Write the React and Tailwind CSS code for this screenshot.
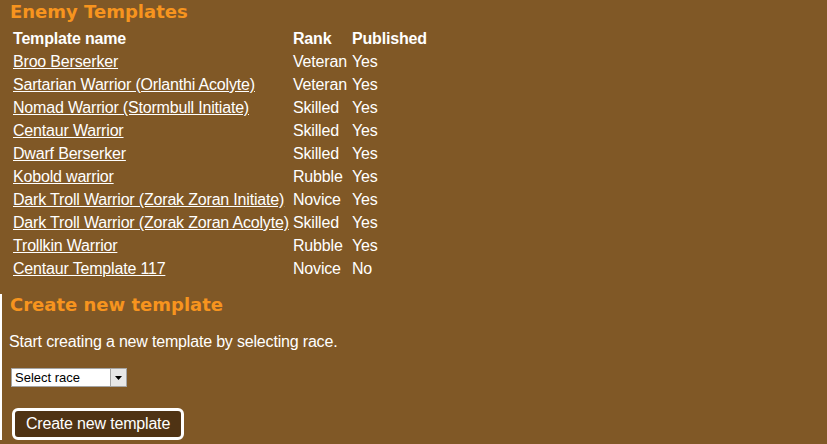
import React from 'react';

const templates = [
  { name: 'Broo Berserker', rank: 'Veteran', published: 'Yes' },
  { name: 'Sartarian Warrior (Orlanthi Acolyte)', rank: 'Veteran', published: 'Yes' },
  { name: 'Nomad Warrior (Stormbull Initiate)', rank: 'Skilled', published: 'Yes' },
  { name: 'Centaur Warrior', rank: 'Skilled', published: 'Yes' },
  { name: 'Dwarf Berserker', rank: 'Skilled', published: 'Yes' },
  { name: 'Kobold warrior', rank: 'Rubble', published: 'Yes' },
  { name: 'Dark Troll Warrior (Zorak Zoran Initiate)', rank: 'Novice', published: 'Yes' },
  { name: 'Dark Troll Warrior (Zorak Zoran Acolyte)', rank: 'Skilled', published: 'Yes' },
  { name: 'Trollkin Warrior', rank: 'Rubble', published: 'Yes' },
  { name: 'Centaur Template 117', rank: 'Novice', published: 'No' },
];

const heading = "font-['DejaVu_Sans',sans-serif] font-bold text-[18px] leading-[22px] text-[#f7941e] tracking-normal";

export default function App() {
  return (
    <div className="w-[827px] h-[444px] overflow-hidden bg-[#805826] text-white font-['Liberation_Sans',Arial,sans-serif] text-[16px] tracking-[-0.18px]">
      <h2 className={`${heading} pl-[10px] pt-[1px]`}>Enemy Templates</h2>
      <table className="ml-[11px] mt-[3px] border-collapse leading-[19px]">
        <thead>
          <tr className="h-[24px] text-left">
            <th className="px-[2px] py-0 font-bold w-[280px] min-w-[280px]">Template name</th>
            <th className="px-[2px] py-0 font-bold w-[59px] min-w-[59px]">Rank</th>
            <th className="px-[2px] py-0 font-bold">Published</th>
          </tr>
        </thead>
        <tbody>
          {templates.map((t) => (
            <tr key={t.name} className="h-[23px]">
              <td className="px-[2px] py-0 whitespace-nowrap">
                <a href="#" className="underline text-white">{t.name}</a>
              </td>
              <td className="px-[2px] py-0 whitespace-nowrap">{t.rank}</td>
              <td className="px-[2px] py-0">{t.published}</td>
            </tr>
          ))}
        </tbody>
      </table>

      <div className="mt-[21px] border-l-2 border-white">
        <h2 className={`${heading} pl-[8px] -mt-[7px]`}>Create new template</h2>
        <p className="pl-[7px] mt-[16px] leading-[20px]">Start creating a new template by selecting race.</p>
        <div className="pl-[9px] mt-[16px]">
          <div className="flex items-stretch w-[116px] h-[19px] bg-white border border-[#a5a5a5]">
            <span className="flex-1 pl-[3px] text-[13px] leading-[17px] text-black tracking-normal">Select race</span>
            <span className="w-[16px] flex items-center justify-center bg-[#e8e8e8] border-l border-[#a5a5a5]">
              <svg width="8" height="4" viewBox="0 0 8 4"><path d="M0 0h7L3.5 4z" fill="#000" /></svg>
            </span>
          </div>
        </div>
        <div className="pl-[10px] mt-[21px]">
          <button className="w-[172px] h-[32px] rounded-[6px] border-[3px] border-white bg-[#4f3314] text-white text-[16px] leading-[20px]">
            Create new template
          </button>
        </div>
      </div>
    </div>
  );
}
